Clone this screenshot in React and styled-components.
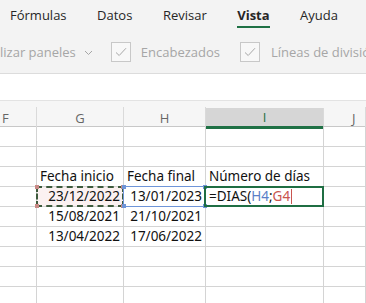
import React from "react";
import styled, { createGlobalStyle } from "styled-components";

const Global = createGlobalStyle`
  html, body { margin: 0; padding: 0; background: #fff; overflow: hidden; }
  #root { width: 366px; height: 303px; overflow: hidden; }
`;

const uiFont = `"Open Sans", "Noto Sans", sans-serif`;
const cellFont = `"Noto Sans", "Liberation Sans", sans-serif`;

const Ribbon = styled.div`
  background: #f3f3f3;
  height: 73px;
  border-bottom: 1px solid #dcdcdc;
  box-shadow: 0 1px 1px rgba(0,0,0,0.05);
  font-family: ${uiFont};
`;

const TabRow = styled.div`
  display: flex;
  height: 33px;
  padding-left: 10px;
  gap: 30.5px;
`;

const Tab = styled.div`
  position: relative;
  font-size: 13px;
  line-height: 30px;
  color: #262626;
  font-weight: ${p => (p.$active ? 700 : 400)};
  &::after {
    content: "";
    display: ${p => (p.$active ? "block" : "none")};
    position: absolute;
    left: 0;
    right: 0;
    top: 26px;
    height: 2px;
    background: #1f7145;
  }
`;

const Toolbar = styled.div`
  display: flex;
  align-items: center;
  height: 38px;
  color: #a6a6a6;
  font-size: 13px;
`;

const ToolLabel = styled.span`
  white-space: nowrap;
`;

const Chevron = styled.svg`
  margin-left: 8px;
  width: 9px;
  height: 9px;
  flex: none;
`;

const Check = styled.div`
  width: 20px;
  height: 20px;
  box-sizing: border-box;
  border: 1px solid #c8c8c8;
  background: #f8f8f8;
  margin-left: ${p => p.$ml}px;
  margin-right: ${p => p.$mr}px;
  display: flex;
  align-items: center;
  justify-content: center;
  flex: none;
`;

const Gap = styled.div`
  height: 26px;
  background: #fff;
`;

const HeaderRow = styled.div`
  display: grid;
  grid-template-columns: 37px 87px 82px 118px 1fr;
  height: 27px;
  box-sizing: border-box;
  border-top: 1px solid #e3e3e3;
  background: #f6f6f6;
  padding-top: 6px;
  border-bottom: 1px solid #c8c8c8;
`;

const ColHead = styled.div`
  box-sizing: border-box;
  border-right: 1px solid #dadada;
  font-family: ${uiFont};
  font-size: 13px;
  color: ${p => (p.$sel ? "#1f6e43" : "#666")};
  display: flex;
  align-items: center;
  justify-content: ${p => p.$align || "center"};
  padding-left: ${p => p.$pl || 0}px;
  background: ${p => (p.$sel ? "#d6d6d6" : "transparent")};
  border-bottom: ${p => (p.$sel ? "3px solid #1f7145" : "0")};
  margin-bottom: ${p => (p.$sel ? "-1px" : "0")};
  margin-top: ${p => (p.$sel ? "1px" : "0")};
`;

const Grid = styled.div`
  display: grid;
  grid-template-columns: 37px 87px 82px 118px 1fr;
  grid-auto-rows: 20px;
`;

const Cell = styled.div`
  position: relative;
  box-sizing: border-box;
  border-right: 1px solid #d4d4d4;
  border-bottom: 1px solid #d4d4d4;
  font-family: ${cellFont};
  font-size: 13.5px;
  color: #111;
  white-space: nowrap;
  overflow: visible;
  display: flex;
  align-items: flex-end;
  justify-content: ${p => (p.$right ? "flex-end" : "flex-start")};
  padding: 0 3px 0 3px;
  line-height: 19px;
  background: ${p => p.$bg || "transparent"};
  z-index: ${p => (p.$z ? 2 : 1)};
`;

const Marquee = styled.div`
  position: absolute;
  inset: -1px -1px -1px -1px;
  border: 2px dashed #3d5a3c;
  pointer-events: none;
`;

const RefBox = styled.div`
  position: absolute;
  inset: -1px -1px -1px -1px;
  border: 1px solid ${p => p.$color};
  pointer-events: none;
`;

const Corner = styled.span`
  position: absolute;
  width: 4px;
  height: 4px;
  background: ${p => p.$color};
  ${p => (p.$top ? "top: -2px;" : "bottom: -2px;")}
  ${p => (p.$left ? "left: -2px;" : "right: -2px;")}
`;

const ActiveBox = styled.div`
  position: absolute;
  inset: -1px -1px -1px -2px;
  border: 2px solid #1f6e43;
  pointer-events: none;
`;

const Ref = styled.span`
  color: ${p => p.$color};
`;

const Caret = styled.span`
  display: inline-block;
  width: 1px;
  height: 15px;
  background: #c9554f;
  margin-left: 1px;
  margin-bottom: 2px;
`;

const Corners = ({ color }) => (
  <>
    <Corner $color={color} $top $left />
    <Corner $color={color} $top />
    <Corner $color={color} $left />
    <Corner $color={color} />
  </>
);

const CheckIcon = () => (
  <svg width="12" height="10" viewBox="0 0 12 10">
    <path d="M1 5.5 L4.2 8.5 L11 1.2" fill="none" stroke="#a8a8a8" strokeWidth="1" />
  </svg>
);

const rows = [
  ["", "", "", "", ""],
  ["", "", "", "", ""],
  ["", "Fecha inicio", "Fecha final", "Número de días", ""],
  ["", "23/12/2022", "13/01/2023", "FORMULA", ""],
  ["", "15/08/2021", "21/10/2021", "", ""],
  ["", "13/04/2022", "17/06/2022", "", ""],
  ["", "", "", "", ""],
  ["", "", "", "", ""],
  ["", "", "", "", ""],
];

const isDate = s => /^\d\d\/\d\d\/\d{4}$/.test(s);

export default function App() {
  return (
    <>
      <Global />
      <Ribbon>
        <TabRow>
          <Tab>Fórmulas</Tab>
          <Tab>Datos</Tab>
          <Tab>Revisar</Tab>
          <Tab $active>Vista</Tab>
          <Tab>Ayuda</Tab>
        </TabRow>
        <Toolbar>
          <ToolLabel>lizar paneles</ToolLabel>
          <Chevron viewBox="0 0 9 9">
            <path d="M1 3 L4.5 6.5 L8 3" fill="none" stroke="#a6a6a6" strokeWidth="1" />
          </Chevron>
          <Check $ml={18} $mr={10}>
            <CheckIcon />
          </Check>
          <ToolLabel>Encabezados</ToolLabel>
          <Check $ml={20} $mr={11}>
            <CheckIcon />
          </Check>
          <ToolLabel>Líneas de división</ToolLabel>
        </Toolbar>
      </Ribbon>
      <Gap />
      <HeaderRow>
        <ColHead $align="flex-start" $pl={2}>F</ColHead>
        <ColHead>G</ColHead>
        <ColHead>H</ColHead>
        <ColHead $sel>I</ColHead>
        <ColHead $align="flex-start" $pl={28}>J</ColHead>
      </HeaderRow>
      <Grid>
        {rows.map((r, ri) =>
          r.map((v, ci) => {
            const key = `${ri}-${ci}`;
            if (v === "FORMULA") {
              return (
                <Cell key={key} $z>
                  <ActiveBox />
                  =DIAS(<Ref $color="#5b7fc7">H4</Ref>;<Ref $color="#c9554f">G4</Ref>
                  <Caret />
                </Cell>
              );
            }
            if (ri === 3 && ci === 1) {
              return (
                <Cell key={key} $right $bg="#fbf1f1" $z>
                  <Marquee />
                  <Corners color="#c98a86" />
                  {v}
                </Cell>
              );
            }
            if (ri === 3 && ci === 2) {
              return (
                <Cell key={key} $right $z>
                  <RefBox $color="#6f95d8" />
                  <Corners color="#6f95d8" />
                  {v}
                </Cell>
              );
            }
            return (
              <Cell key={key} $right={isDate(v)}>
                {v}
              </Cell>
            );
          })
        )}
      </Grid>
    </>
  );
}
